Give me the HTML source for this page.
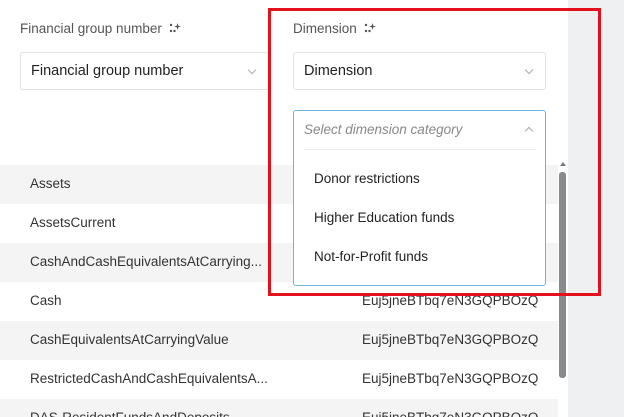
<!DOCTYPE html>
<html style="overflow:hidden;width:624px;height:417px"><head><style>
*{margin:0;padding:0;box-sizing:border-box}
body{width:624px;height:417px;overflow:hidden;background:#fff;font-family:"Liberation Sans",sans-serif;position:relative;color:#333}
.abs{position:absolute}
.lbl{font-size:13.5px;color:#555;top:21px}
.sel{top:52px;height:38px;border:1px solid #e2e2e2;border-radius:3px;background:#fff;font-size:14.5px;color:#222;padding:10px 0 0 10px}
.chev{position:absolute;right:13px;top:14px;width:6px;height:6px;border-right:1.2px solid #aaa;border-bottom:1.2px solid #aaa;transform:rotate(45deg)}
.row{position:absolute;left:0;width:558px;height:39px;font-size:13.5px;color:#333;overflow:hidden}
.row span{position:absolute;top:11px}
.g{background:#f4f4f4}
.v{left:362px}
.n{left:30px}
.item{position:absolute;left:20px;font-size:13.5px;color:#222}
</style></head><body>
<div class="abs" style="left:568px;top:0;width:56px;height:417px;background:#eff0f2"></div>
<div class="abs lbl" style="left:20px">Financial group number <svg width="12" height="12" viewBox="0 0 12 12" style="vertical-align:-1px;margin-left:3px"><g fill="#555"><circle cx="2" cy="3" r="1.2"/><circle cx="2" cy="9" r="1.2"/><circle cx="5.5" cy="9" r="1.2"/><path d="M8.5 1 L9.3 3.7 L12 4.5 L9.3 5.3 L8.5 8 L7.7 5.3 L5 4.5 L7.7 3.7Z"/></g></svg></div>
<div class="abs lbl" style="left:293px">Dimension <svg width="12" height="12" viewBox="0 0 12 12" style="vertical-align:-1px;margin-left:3px"><g fill="#555"><circle cx="2" cy="3" r="1.2"/><circle cx="2" cy="9" r="1.2"/><circle cx="5.5" cy="9" r="1.2"/><path d="M8.5 1 L9.3 3.7 L12 4.5 L9.3 5.3 L8.5 8 L7.7 5.3 L5 4.5 L7.7 3.7Z"/></g></svg></div>
<div class="abs sel" style="left:20px;width:249px">Financial group number<div class="chev"></div></div>
<div class="abs sel" style="left:293px;width:253px">Dimension<div class="chev"></div></div>

<div class="row g" style="top:165px"><span class="n">Assets</span></div>
<div class="row" style="top:204px"><span class="n">AssetsCurrent</span></div>
<div class="row g" style="top:243px"><span class="n">CashAndCashEquivalentsAtCarrying...</span></div>
<div class="row" style="top:282px"><span class="n">Cash</span><span class="v">Euj5jneBTbq7eN3GQPBOzQ</span></div>
<div class="row g" style="top:321px"><span class="n">CashEquivalentsAtCarryingValue</span><span class="v">Euj5jneBTbq7eN3GQPBOzQ</span></div>
<div class="row" style="top:360px"><span class="n">RestrictedCashAndCashEquivalentsA...</span><span class="v">Euj5jneBTbq7eN3GQPBOzQ</span></div>
<div class="row g" style="top:399px;height:18px"><span class="n">DAS-ResidentFundsAndDeposits</span><span class="v">Euj5jneBTbq7eN3GQPBOzQ</span></div>

<div class="abs" style="left:560px;top:162px;width:0;height:0;border-left:3px solid transparent;border-right:3px solid transparent;border-bottom:4px solid #777"></div>
<div class="abs" style="left:559px;top:172px;width:7px;height:206px;background:#8a8a8a;border-radius:3px"></div>

<div class="abs" style="left:293px;top:110px;width:253px;height:176px;border:1px solid #6cb4e0;border-radius:3px;background:#fff">
<div class="abs" style="left:10px;top:11px;font-size:13.5px;font-style:italic;color:#888">Select dimension category</div>
<div class="abs" style="right:13px;top:17px;width:6px;height:6px;border-left:1.2px solid #aaa;border-top:1.2px solid #aaa;transform:rotate(45deg)"></div>
<div class="abs" style="left:10px;top:38px;width:232px;height:1px;background:#eee"></div>
<div class="item" style="top:60px">Donor restrictions</div>
<div class="item" style="top:99px">Higher Education funds</div>
<div class="item" style="top:138px">Not-for-Profit funds</div>
</div>

<div class="abs" style="left:268px;top:8px;width:333px;height:288px;border:3px solid #e4101c"></div>
</body></html>
